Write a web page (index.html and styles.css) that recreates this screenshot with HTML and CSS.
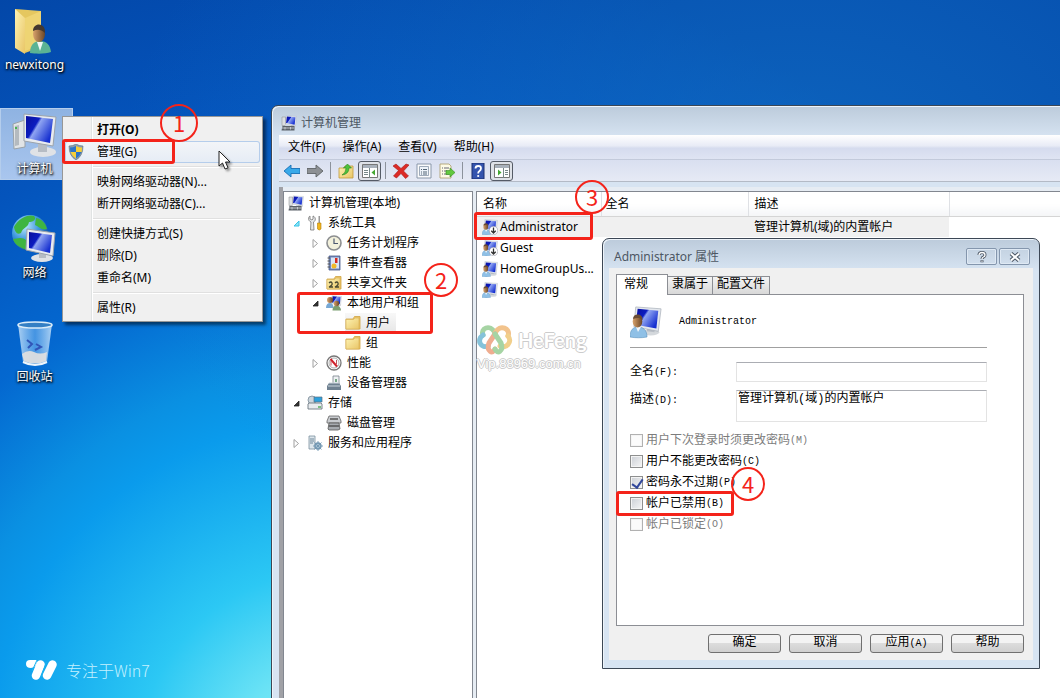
FILE: index.html
```html
<!DOCTYPE html>
<html lang="zh-CN">
<head>
  <meta charset="UTF-8">
  <meta name="viewport" content="width=device-width, initial-scale=1.0">
  <title>计算机管理</title>
  <link rel="stylesheet" href="styles.css">
</head>
<body>

<!-- shared icons -->
<svg class="defs" width="0" height="0" aria-hidden="true">
  <defs>
    <linearGradient id="screen" x1="0" y1="0" x2="1" y2=".6">
      <stop offset="0" stop-color="#0a0f9c"/><stop offset=".4" stop-color="#0c1cc0"/><stop offset=".48" stop-color="#8fa4f2"/><stop offset="1" stop-color="#1630d0"/>
    </linearGradient>
    <linearGradient id="yellow" x1="0" y1="0" x2="1" y2="1">
      <stop offset="0" stop-color="#fdf3b4"/><stop offset="1" stop-color="#e9c566"/>
    </linearGradient>
    <linearGradient id="skin" x1="0" y1="0" x2="1" y2="0">
      <stop offset="0" stop-color="#d9a36c"/><stop offset="1" stop-color="#6a4526"/>
    </linearGradient>
    <radialGradient id="earth" cx=".35" cy=".3" r=".8">
      <stop offset="0" stop-color="#bfeaff"/><stop offset=".5" stop-color="#3c97dc"/><stop offset="1" stop-color="#0a3f8e"/>
    </radialGradient>
    <linearGradient id="glass" x1="0" y1="0" x2="1" y2="0">
      <stop offset="0" stop-color="#d4eafc" stop-opacity=".8"/><stop offset=".5" stop-color="#6fb3f0" stop-opacity=".6"/><stop offset="1" stop-color="#d4eafc" stop-opacity=".8"/>
    </linearGradient>
    <symbol id="i-monitor" viewBox="0 0 32 32">
      <ellipse cx="20" cy="28" rx="9" ry="3.500" fill="#d4d8dc"/>
      <path d="M16 22l8 1v5l-8-1z" fill="#b8bec6"/>
      <path d="M4 1l27 2-3 24L2 22z" fill="#e4e8ee" stroke="#a4abb4" stroke-width=".7"/>
      <path d="M6 3l22 2-2 19L4 20z" fill="url(#screen)"/>
    </symbol>
    <symbol id="i-user" viewBox="0 0 32 32">
      <svg x="2" y="0" width="30" height="30" viewBox="0 0 32 32"><use href="#i-monitor"/></svg>
      <path d="M0 31c0-7 3-10 8-10s9 3 9 10c-5 1-12 1-17 0z" fill="#8fc0e6" stroke="#5b92be" stroke-width=".6"/>
      <path d="M6 21l2 5 3-5z" fill="#f2f6fa"/>
      <ellipse cx="7.500" cy="15.500" rx="4.800" ry="6" fill="url(#skin)"/>
      <path d="M3 13c0-6 10-6 9.500 1-3-3-6-2-9.500-1z" fill="#6a4c33"/>
    </symbol>
    <symbol id="i-userdown" viewBox="0 0 32 32">
      <use href="#i-user"/>
      <circle cx="23" cy="23" r="8.500" fill="#fff" stroke="#889" stroke-width="1"/>
      <path d="M23 17v11M18.500 23.500L23 28l4.500-4.500" fill="none" stroke="#333" stroke-width="2.600"/>
    </symbol>
    <symbol id="i-group" viewBox="0 0 32 32">
      <svg x="9" y="0" width="23" height="24" viewBox="0 0 32 32"><use href="#i-monitor"/></svg>
      <path d="M0 26c0-7 3-10 8-10s7 4 7 10z" fill="#78a8d4"/>
      <circle cx="8" cy="10" r="6" fill="url(#skin)"/>
      <path d="M13 31c0-7 3-10 8-10s9 4 9 10z" fill="#7d9f72"/>
      <circle cx="21" cy="17" r="5.500" fill="url(#skin)"/>
    </symbol>
    <symbol id="i-mmc" viewBox="0 0 32 32">
      <svg x="7" y="0" width="25" height="26" viewBox="0 0 32 32"><use href="#i-monitor"/></svg>
      <path d="M2 4h7v17H2z" fill="#dcdfe2" stroke="#888" stroke-width="1"/>
      <path d="M3 22h24v9H1z" fill="#5b6168"/>
      <path d="M9 22v-3h9v3M2 26h24M8 24v5M19 24v5" fill="none" stroke="#d6d9dd" stroke-width="1.600"/>
    </symbol>
    <symbol id="i-folder" viewBox="0 0 16 16">
      <path d="M1 4h7l1.500-2.500H15V14H1z" fill="#edc768" stroke="#cfa343" stroke-width=".8"/>
      <path d="M1 4.500h7.500L10 3h4v11H1z" fill="url(#yellow)" stroke="#d8b055" stroke-width=".6"/>
    </symbol>
    <symbol id="i-tools" viewBox="0 0 16 16">
      <path d="M3 1v3l2 1 1-1V1c3 1 3 5 .5 6l.5 8H3.500L4 7C1 6 1 2 3 1z" fill="#e6e8ea" stroke="#777" stroke-width=".8"/>
      <path d="M11.500 1h1.500v7h-1.500z" fill="#999"/>
      <path d="M10.500 8h3.500v6q-1.700 2-3.500 0z" fill="#f2b61c" stroke="#b27d0b" stroke-width=".6"/>
    </symbol>
    <symbol id="i-clock" viewBox="0 0 16 16">
      <circle cx="8" cy="8" r="7" fill="#f3f1dc" stroke="#8c8e90" stroke-width="1.600"/>
      <path d="M8 3.500V8.500h4" fill="none" stroke="#4c5870" stroke-width="1.200"/>
    </symbol>
    <symbol id="i-event" viewBox="0 0 16 16">
      <path d="M3 1h11v14H3z" fill="#7389bd" stroke="#4a5b8b" stroke-width=".8"/>
      <path d="M5 2.500h8v11H5z" fill="#dbe5f6"/>
      <path d="M1.500 3h2.500M1.500 6h2.500M1.500 9h2.500M1.500 12h2.500" stroke="#555" stroke-width="1"/>
      <path d="M9 3h2.500v5H9z" fill="#d42a22"/><circle cx="8" cy="11" r="2.500" fill="#f0b929"/>
    </symbol>
    <symbol id="i-share" viewBox="0 0 16 16">
      <use href="#i-folder"/>
      <path d="M3 8q2-2 3 0t-3 4h4M9 8q2-2 3 0t-3 4h4" fill="none" stroke="#4a4a32" stroke-width="1.300"/>
    </symbol>
    <symbol id="i-perf" viewBox="0 0 16 16">
      <circle cx="8" cy="8" r="7" fill="#fff" stroke="#777" stroke-width="1.300"/>
      <circle cx="8" cy="8" r="5" fill="none" stroke="#999" stroke-width=".8"/>
      <path d="M4.500 4l6.500 7.500" stroke="#d1202a" stroke-width="2"/>
      <path d="M5 6v4.500M10.500 5v4" stroke="#c0525a" stroke-width="1"/>
    </symbol>
    <symbol id="i-device" viewBox="0 0 16 16">
      <path d="M7 1h6v8H7z" fill="#eef1f3" stroke="#76818a" stroke-width=".8"/><path d="M9 4h2v3H9z" fill="#76a886"/>
      <path d="M3 8h10l2 3v4H1v-4z" fill="#6f8191"/><path d="M2 11h12M3 8h10" stroke="#cdd6dd" stroke-width="1"/>
    </symbol>
    <symbol id="i-storage" viewBox="0 0 16 16">
      <circle cx="5" cy="5" r="4" fill="#cdd6dd" stroke="#7a8a97" stroke-width=".8"/>
      <path d="M7 2h8v5H7z" fill="#2da0dc" stroke="#5c7183" stroke-width=".7"/>
      <path d="M1 9l1-1h12l1 1v5H1z" fill="#e8ebee" stroke="#6d7882" stroke-width=".9"/>
      <path d="M11 12h3" stroke="#33a03a" stroke-width="1.200"/>
    </symbol>
    <symbol id="i-disk" viewBox="0 0 16 16">
      <path d="M3 1h10l2 5v2H1V6z" fill="#c9ccd0" stroke="#666" stroke-width=".8"/>
      <path d="M3 8h10l1 6-2 1H3l-1-1z" fill="#a7abb0" stroke="#555" stroke-width=".8"/>
      <path d="M4 4h8M3 11h10" stroke="#555" stroke-width="1.300"/>
    </symbol>
    <symbol id="i-service" viewBox="0 0 16 16">
      <path d="M2 1h6v13H2z" fill="#dde6ec" stroke="#7b909e" stroke-width=".8"/>
      <path d="M3 4h4M3 6h4M3 8h3" stroke="#71899b" stroke-width="1"/>
      <circle cx="11" cy="11" r="3" fill="#c9dbe8" stroke="#7397b2" stroke-width="1.300"/>
      <path d="M11 6v10M6 11h10M7.500 7.500l7 7M14.500 7.500l-7 7" stroke="#7397b2" stroke-width=".9"/>
    </symbol>
    <symbol id="i-closed" viewBox="0 0 9 9"><path d="M2 .5L6.500 4.500 2 8.500z" fill="#fff" stroke="#a0a0a0"/></symbol>
    <symbol id="i-open" viewBox="0 0 9 9"><path d="M7 2v5H2z" fill="#333" stroke="#222" stroke-width=".8"/></symbol>
    <symbol id="i-openhot" viewBox="0 0 9 9"><path d="M7 2v5H2z" fill="#8be4f6" stroke="#38c3e6"/></symbol>
  </defs>
</svg>

<main class="desktop">

  <div class="shortcuts">
    <a class="shortcut" href="#">
      <svg viewBox="0 0 48 48">
        <path d="M4 2l26 2v36L14 46z" fill="#e5c75f"/>
        <path d="M4 2l10 9v36L4 41z" fill="url(#yellow)"/>
        <path d="M14 11l16-7v34l-16 6z" fill="#f0d778" opacity=".8"/>
        <path d="M19 46c0-8 4-12 10-12 7 0 10 4 11 11-5 2-15 2-21 1z" fill="#5bb394"/>
        <path d="M26 35l3 9 3-9z" fill="#eef7f4"/>
        <ellipse cx="28" cy="27" rx="6" ry="8" fill="url(#skin)"/>
        <path d="M22 24c0-9 13-9 12 2-4-4-8-4-12-2z" fill="#43382f"/>
      </svg>
      <span>newxitong</span>
    </a>
    <a class="shortcut selected" href="#">
      <svg viewBox="0 0 48 48">
        <path d="M2 13l12-4v27L3 38z" fill="#e1e4e6" stroke="#9aa2a8"/>
        <path d="M4 15l4-1v20l-4 1z" fill="#b4babf"/><circle cx="5" cy="17" r="1" fill="#23b32b"/>
        <ellipse cx="32" cy="41" rx="13" ry="5" fill="#dfe2e6"/>
        <path d="M27 32h9v9h-9z" fill="#b6bcc4"/>
        <path d="M13 3l32 3-3 29-29-5z" fill="#e8ebef" stroke="#9ba3ac"/>
        <path d="M15 5l27 3-3 24-24-5z" fill="url(#screen)"/>
      </svg>
      <span>计算机</span>
    </a>
    <a class="shortcut" href="#">
      <svg viewBox="0 0 48 48">
        <circle cx="19" cy="18" r="18" fill="url(#earth)"/>
        <path d="M3 12C8 3 17-1 23 1c3 3-1 6-5 6-1 6-6 5-8 11-4 2-6-1-7-6zM25 3c6 1 10 6 11 11-5 2-9-3-12-4zM9 23c6 0 9 4 8 12C9 33 3 29 2 24z" fill="#3fb541"/>
        <ellipse cx="31" cy="43" rx="11" ry="4" fill="#dfe2e6"/>
        <path d="M28 34h7v9h-7z" fill="#b6bcc4"/>
        <path d="M16 14l28 4-2 23-27-6z" fill="#e8ebef" stroke="#9ba3ac"/>
        <path d="M18 17l23 3-2 18-21-5z" fill="url(#screen)"/>
      </svg>
      <span>网络</span>
    </a>
    <a class="shortcut" href="#">
      <svg viewBox="0 0 48 48">
        <path d="M7 5h34l-5 38q-12 6-24 0z" fill="url(#glass)"/>
        <path d="M11 35q6-5 12-2t13 0l-1 9q-11 5-22 0z" fill="#e3e1df" opacity=".9"/>
        <path d="M16 21l5 4-4 4M25 25l5 3-6 3" fill="none" stroke="#3156b8" stroke-width="2"/>
        <ellipse cx="24" cy="6" rx="17" ry="3" fill="#347fc4" stroke="#dcecf8" stroke-width="1.500"/>
        <path d="M12 43q12 6 24 0" fill="none" stroke="#edf5fb" stroke-width="2"/>
      </svg>
      <span>回收站</span>
    </a>
  </div>

  <div class="brand">
    <svg viewBox="0 0 33 20">
      <path d="M1 4Q1 0 5 0h7q0 7-6 8Q1 8 1 4z" fill="#fff"/>
      <path d="M15.500 4.500L11 15.500M27.500 4.500L22 15.500" stroke="#fff" stroke-width="8.500" stroke-linecap="round"/>
      <path d="M12 0L7 11M21.500 2L16 17" stroke="#18b4f0" stroke-width="1"/>
    </svg>
    <span>专注于Win7</span>
  </div>

  <section class="window manager">
    <header class="titlebar">
      <svg class="icon"><use href="#i-mmc"/></svg>
      <span>计算机管理</span>
    </header>
    <nav class="menubar">
      <button>文件(F)</button>
      <button>操作(A)</button>
      <button>查看(V)</button>
      <button>帮助(H)</button>
    </nav>
    <div class="toolbar">
      <button aria-label="后退"><svg viewBox="0 0 16 16"><path d="M0 8l7-6v3.500h9v5H7V14z" fill="#39a9ea" stroke="#1a6fb4" stroke-width=".9"/></svg></button>
      <button aria-label="前进"><svg viewBox="0 0 16 16"><path d="M16 8L9 2v3.500H0v5h9V14z" fill="#8d9094" stroke="#606468" stroke-width=".9"/></svg></button>
      <i class="divider"></i>
      <button aria-label="上一级"><svg viewBox="0 0 16 16"><path d="M1 5h5l1-2h8v12H1z" fill="url(#yellow)" stroke="#c39a3b" stroke-width=".8"/><path d="M4 12q4-2 4-7H5.500L9.500 1l4 4H11q0 6-7 7z" fill="#4cc13d" stroke="#27861e" stroke-width=".6"/></svg></button>
      <button class="pressed" aria-label="显示树"><svg viewBox="0 0 16 16"><path d="M.5 1.500h15v13H.5z" fill="#fff" stroke="#777"/><path d="M1 2h14v3H1z" fill="#a9b1bb"/><path d="M7.500 5v10M2 7.500h4M2 9.500h4M2 11.500h4" stroke="#788" stroke-width="1"/><path d="M13 6.500v6L9.500 9.500z" fill="#45a832"/></svg></button>
      <i class="divider"></i>
      <button aria-label="删除"><svg viewBox="0 0 16 16"><path d="M0 3l3-2 5 4.500L13 1l3 1-5.500 6 5 5-3 2.500L8 10.500 3.500 15 .5 13l5-5.500z" fill="#dc2a26" stroke="#a81915" stroke-width=".6"/></svg></button>
      <button aria-label="属性"><svg viewBox="0 0 16 16"><path d="M1 1h14v14H1z" fill="#fbfbfc" stroke="#8997aa"/><path d="M3.500 3.500h9v9h-9z" fill="#eef3f9" stroke="#8997aa" stroke-width=".8"/><path d="M5 6.500h1M7 6.500h4M5 9h1M7 9h4M5 11h1M7 11h4" stroke="#567"/></svg></button>
      <button aria-label="导出列表"><svg viewBox="0 0 16 16"><path d="M1 1h9l2 2v12H1z" fill="#fdfbe6" stroke="#a89a68" stroke-width=".8"/><path d="M3 5h1M5 5h5M3 8h1M5 8h3M3 11h1M5 11h5" stroke="#667"/><path d="M7 7.500h4V5l5 4.500-5 4.500v-2.500H7z" fill="#62c83f" stroke="#358c1e" stroke-width=".6"/></svg></button>
      <i class="divider"></i>
      <button aria-label="帮助"><svg viewBox="0 0 16 16"><path d="M2 0h12v16H2z" fill="#3454ae" stroke="#1b2e70"/><path d="M5.500 5.500q0-2.500 2.700-2.500t2.800 2.300Q11 7 9.500 8T8.200 10.500" fill="none" stroke="#fff" stroke-width="1.800"/><circle cx="8.200" cy="13" r="1.100" fill="#fff"/></svg></button>
      <button class="pressed" aria-label="显示操作"><svg viewBox="0 0 16 16"><path d="M.5 1.500h15v13H.5z" fill="#fff" stroke="#777"/><path d="M1 2h14v3H1z" fill="#a9b1bb"/><path d="M9.500 5v10M11 7.500h3M11 9.500h3M11 11.500h3" stroke="#788" stroke-width="1"/><path d="M4 6.500v6l3.500-3z" fill="#45a832"/></svg></button>
    </div>

    <div class="workspace">
      <div class="tree">
        <div class="node root"><svg class="icon"><use href="#i-mmc"/></svg><span>计算机管理(本地)</span></div>
        <ul>
          <li>
            <div class="node"><svg class="arrow"><use href="#i-openhot"/></svg><svg class="icon"><use href="#i-tools"/></svg><span>系统工具</span></div>
            <ul>
              <li><div class="node"><svg class="arrow"><use href="#i-closed"/></svg><svg class="icon"><use href="#i-clock"/></svg><span>任务计划程序</span></div></li>
              <li><div class="node"><svg class="arrow"><use href="#i-closed"/></svg><svg class="icon"><use href="#i-event"/></svg><span>事件查看器</span></div></li>
              <li><div class="node"><svg class="arrow"><use href="#i-closed"/></svg><svg class="icon"><use href="#i-share"/></svg><span>共享文件夹</span></div></li>
              <li>
                <div class="node"><svg class="arrow"><use href="#i-open"/></svg><svg class="icon"><use href="#i-group"/></svg><span>本地用户和组</span></div>
                <ul>
                  <li><div class="node leaf current"><svg class="icon"><use href="#i-folder"/></svg><span>用户</span></div></li>
                  <li><div class="node leaf"><svg class="icon"><use href="#i-folder"/></svg><span>组</span></div></li>
                </ul>
              </li>
              <li><div class="node"><svg class="arrow"><use href="#i-closed"/></svg><svg class="icon"><use href="#i-perf"/></svg><span>性能</span></div></li>
              <li><div class="node leaf"><svg class="icon"><use href="#i-device"/></svg><span>设备管理器</span></div></li>
            </ul>
          </li>
          <li>
            <div class="node"><svg class="arrow"><use href="#i-open"/></svg><svg class="icon"><use href="#i-storage"/></svg><span>存储</span></div>
            <ul>
              <li><div class="node leaf"><svg class="icon"><use href="#i-disk"/></svg><span>磁盘管理</span></div></li>
            </ul>
          </li>
          <li><div class="node"><svg class="arrow"><use href="#i-closed"/></svg><svg class="icon"><use href="#i-service"/></svg><span>服务和应用程序</span></div></li>
        </ul>
      </div>

      <div class="list">
        <table>
          <colgroup><col class="c-name"><col class="c-full"><col class="c-desc"><col></colgroup>
          <thead>
            <tr><th>名称</th><th>全名</th><th>描述</th><th></th></tr>
          </thead>
          <tbody>
            <tr class="current"><td><div class="user"><svg class="icon"><use href="#i-userdown"/></svg>Administrator</div></td><td></td><td class="desc">管理计算机(域)的内置帐户</td><td></td></tr>
            <tr><td><div class="user"><svg class="icon"><use href="#i-userdown"/></svg>Guest</div></td><td></td><td></td><td></td></tr>
            <tr><td><div class="user"><svg class="icon"><use href="#i-user"/></svg>HomeGroupUs...</div></td><td></td><td></td><td></td></tr>
            <tr><td><div class="user"><svg class="icon"><use href="#i-user"/></svg>newxitong</div></td><td></td><td></td><td></td></tr>
          </tbody>
        </table>
        <div class="watermark">
          <div class="mark-top">
            <svg viewBox="0 0 36 32">
              <g fill="none" stroke-width="5" stroke-linecap="round">
                <path d="M18 9C13-1 3 5 6 11" stroke="#a6d4a4"/>
                <path d="M18 9C23-1 34 5 31 12" stroke="#f2c38c"/>
                <path d="M6 11C-1 16 4 25 11 22" stroke="#85c2da"/>
                <path d="M31 12c5 6-2 13-8 10" stroke="#f1cf8b"/>
                <path d="M18 10l-6 9c-3 8 4 12 6 6" stroke="#efad90"/>
                <path d="M18 10l6 9c3 8-4 12-6 6" stroke="#a6d4a4"/>
              </g>
            </svg>
            <b>HeFeng</b>
          </div>
          <div class="mark-url">Vip.88969.com.cn</div>
        </div>
      </div>
    </div>
  </section>

  <section class="window dialog" role="dialog" aria-label="Administrator 属性">
    <header class="titlebar">
      <span>Administrator 属性</span>
      <button aria-label="帮助"><svg viewBox="0 0 12 12"><path d="M3 4q0-2.500 3-2.500T9 4q0 1.500-1.500 2T6 8M6 9.200v2" fill="none" stroke="#4a5563" stroke-width="3"/><path d="M3 4q0-2.500 3-2.500T9 4q0 1.500-1.500 2T6 8M6 9.700v1" fill="none" stroke="#fff" stroke-width="1.300"/></svg></button>
      <button aria-label="关闭"><svg viewBox="0 0 12 12"><path d="M2 2.500l8 7M10 2.500l-8 7" stroke="#4a5563" stroke-width="4"/><path d="M2 2.500l8 7M10 2.500l-8 7" stroke="#fff" stroke-width="2"/></svg></button>
    </header>
    <div class="client">
      <div class="tabs">
        <button class="active">常规</button>
        <button>隶属于</button>
        <button>配置文件</button>
      </div>
      <div class="panel">
        <div class="who"><svg><use href="#i-user"/></svg><span class="en">Administrator</span></div>
        <div class="field"><label for="fullname">全名<span class="en">(F):</span></label><input type="text" id="fullname"></div>
        <div class="field"><label for="desc">描述<span class="en">(D):</span></label><textarea id="desc">管理计算机(域)的内置帐户</textarea></div>
        <div class="checks">
          <label class="off"><input type="checkbox" disabled>用户下次登录时须更改密码<span class="en">(M)</span></label>
          <label><input type="checkbox">用户不能更改密码<span class="en">(C)</span></label>
          <label><input type="checkbox" checked>密码永不过期<span class="en">(P)</span></label>
          <label><input type="checkbox">帐户已禁用<span class="en">(B)</span></label>
          <label class="off"><input type="checkbox" disabled>帐户已锁定<span class="en">(O)</span></label>
        </div>
      </div>
      <div class="actions">
        <button>确定</button>
        <button>取消</button>
        <button>应用<span class="en">(A)</span></button>
        <button>帮助</button>
      </div>
    </div>
  </section>

  <div class="context">
    <button class="bold">打开(O)</button>
    <button class="hover"><svg viewBox="0 0 16 16"><path d="M8 0q3 2 7 2 0 10-7 14Q1 12 1 2q4 0 7-2z" fill="#8ea0ae" stroke="#5b6d7b" stroke-width=".6"/><path d="M8 2v6H2.500Q2 6 2 3.500 5 3.500 8 2z" fill="#2c74c8"/><path d="M8 2v6h5.500q.5-2 .5-4.500Q11 3.500 8 2z" fill="#f6cf38"/><path d="M8 8v6.500Q4 12 2.500 8z" fill="#f6cf38"/><path d="M8 8v6.500q4-2.500 5.500-6.500z" fill="#2c74c8"/></svg>管理(G)</button>
    <hr>
    <button>映射网络驱动器(N)...</button>
    <button>断开网络驱动器(C)...</button>
    <hr>
    <button>创建快捷方式(S)</button>
    <button>删除(D)</button>
    <button>重命名(M)</button>
    <hr>
    <button>属性(R)</button>
  </div>

  <svg class="cursor" viewBox="0 0 13 20"><path d="M1 1v15l3.500-3 2.500 6 3-1.200L7.500 12H12z" fill="#fff" stroke="#222" stroke-width="1"/></svg>

  <!-- step marks -->
  <div class="frame frame-1"></div><div class="step step-1">1</div>
  <div class="frame frame-2"></div><div class="step step-2">2</div>
  <div class="frame frame-3"></div><div class="step step-3">3</div>
  <div class="frame frame-4"></div><div class="step step-4">4</div>
</main>

</body>
</html>
```
FILE: styles.css
```css
* {
  box-sizing: border-box;
}
body {
  margin: 0;
  font: 12px/20px "Noto Sans", "Noto Sans CJK SC", sans-serif;
  color: #000;
}
button, input, textarea {
  font: inherit;
  color: inherit;
  margin: 0;
}
button {
  border: 0;
  padding: 0;
  background: none;
  white-space: nowrap;
}
.defs {
  position: absolute;
}
.icon {
  width: 16px;
  height: 16px;
  flex: none;
}
.desktop {
  position: relative;
  height: 100vh;
  overflow: hidden;
  background:
    radial-gradient(ellipse at 75% 25%, rgba(20, 120, 205, .6), rgba(20, 120, 205, 0) 60%),
    radial-gradient(circle at 31% 109%, #8cf0f9 0, #6ce3f5 92px, #2cc8f4 190px, #0a9bec 340px, #0a90e2 390px, #0468d0 500px, #0454bc 650px, #0347a8 830px);
}

/* desktop shortcuts */
.shortcuts {
  display: flex;
  flex-direction: column;
  gap: 32px;
  width: 73px;
  padding-top: 4px;
}
.shortcut {
  display: flex;
  flex-direction: column;
  align-items: center;
  height: 72px;
  padding: 3px 4px 0 0;
  color: #fff;
  text-decoration: none;
  text-shadow: 1px 1px 2px #000, 0 1px 3px #000;
}
.shortcut svg {
  width: 48px;
  height: 48px;
}
.shortcut.selected {
  padding-top: 2px;
  background: linear-gradient(#8fb3e2, #a9c6ee);
  border: 1px solid #b4cdec;
}
.brand {
  position: absolute;
  left: 25px;
  bottom: 16px;
  display: flex;
  align-items: center;
  gap: 8px;
  font-size: 16px;
  line-height: 24px;
  color: #c4f1ff;
}
.brand span {
  font-family: "Noto Sans CJK SC", sans-serif;
  font-weight: 300;
}
.brand svg {
  width: 33px;
  height: 20px;
}

/* windows */
.window {
  position: absolute;
  border: 1px solid #3c4755;
  border-radius: 7px 7px 0 0;
  background: linear-gradient(#bccbdb, #d7e4f2 32px);
  box-shadow: inset 1px 1px 0 #eef4fa;
}
.titlebar {
  display: flex;
  align-items: center;
  color: #4d5763;
}
.manager {
  display: flex;
  flex-direction: column;
  left: 271px;
  right: -8px;
  top: 105px;
  bottom: -8px;
  padding-left: 7px;
}
.manager .titlebar {
  height: 29px;
  padding: 4px 0 0 2px;
  gap: 4px;
}
.menubar {
  display: flex;
  gap: 17px;
  height: 24px;
  padding-left: 9px;
  background: linear-gradient(#fff, #e8ebf6 45%, #d5dbee 55%, #dfe4f3);
}
.toolbar {
  display: flex;
  align-items: center;
  height: 23px;
  padding-left: 5px;
  gap: 7px;
  background: linear-gradient(#d9dff0, #e6eaf5);
  border-top: 1px solid #c3cadb;
  border-bottom: 1px solid #b3bac6;
}
.toolbar button {
  width: 16px;
  height: 16px;
}
.toolbar svg {
  display: block;
  width: 16px;
  height: 16px;
}
.toolbar .pressed {
  width: 23px;
  height: 20px;
  padding: 0 3px;
  margin: 0 -3px;
  border: 1px solid #555b66;
  border-radius: 3px;
  background: #dfe2e8;
}
.divider {
  width: 1px;
  height: 17px;
  background: #8c929c;
}
.workspace {
  flex: 1;
  display: flex;
  gap: 3px;
  padding-top: 4px;
  margin-top: 5px;
  background: #e6ecf3;
  border-left: 4px solid #a0a1a6;
}
.tree {
  flex: none;
  width: 190px;
  padding-top: 1px;
  background: #fff;
  border: 1px solid #828790;
}
.tree ul {
  margin: 0;
  padding: 0 0 0 19px;
  list-style: none;
}
.tree > ul {
  padding-left: 8px;
}
.node {
  display: flex;
  align-items: center;
  height: 20px;
  white-space: nowrap;
}
.node span {
  padding: 0 5px;
}
.arrow {
  flex: none;
  width: 9px;
  height: 9px;
  margin-right: 6px;
}
.root {
  padding-left: 4px;
}
.leaf {
  padding-left: 15px;
}
.current.leaf {
  width: 66px;
  background: linear-gradient(#f8f8f8, #e6e6e6) content-box;
}
.list {
  flex: 1;
  background: #fff;
  border: 1px solid #828790;
}
.list table {
  width: 100%;
  table-layout: fixed;
  border-collapse: collapse;
}
.c-name {
  width: 124px;
}
.c-full {
  width: 147px;
}
.c-desc {
  width: 201px;
}
.list th {
  height: 24px;
  padding: 1px 0 0 6px;
  font-weight: normal;
  text-align: left;
  background: linear-gradient(#fff 50%, #f4f5f7);
  border-right: 1px solid #dfe1e5;
  border-bottom: 1px solid #d5d5d5;
}
.list th:nth-child(2) {
  padding-left: 4px;
}
.list td {
  height: 21px;
  padding: 0 0 0 6px;
  white-space: nowrap;
}
.list .user {
  display: flex;
  align-items: center;
  gap: 2px;
  margin-left: -1px;
}
.list .current td:not(:last-child) {
  background: #f0f0f0;
}
.watermark {
  width: 110px;
  margin-top: 24px;
}
.mark-top {
  display: flex;
  align-items: center;
  gap: 5px;
  font-size: 20px;
  line-height: 30px;
}
.mark-top b {
  font-family: Lato, sans-serif;
}
.mark-top b, .mark-url {
  color: #fff;
  text-shadow: 1px 0 #ccc, -1px 0 #ccc, 0 1px #ccc, 0 -1px #ccc;
}
.mark-top svg {
  width: 36px;
  height: 32px;
}
.mark-url {
  font: 13px/16px "Liberation Sans", sans-serif;
}

/* properties dialog */
.dialog {
  left: 602px;
  right: 20px;
  top: 238px;
  padding: 0 6px 8px;
  font-family: "Liberation Mono", "Noto Sans CJK SC", monospace;
}
.dialog .titlebar {
  height: 29px;
  gap: 2px;
  padding: 6px 3px 0 5px;
  font: 12px/20px "Noto Sans", "Noto Sans CJK SC", sans-serif;
}
.dialog .titlebar span {
  flex: 1;
}
.dialog .titlebar button {
  display: flex;
  align-items: center;
  justify-content: center;
  width: 31px;
  height: 17px;
  border: 1px solid #8496ad;
  border-radius: 2px;
  box-shadow: inset 0 0 0 1px #dfe9f4;
}
.dialog .titlebar svg {
  width: 12px;
  height: 12px;
}
.client {
  padding: 6px 9px 7px 7px;
  background: #f0f0f0;
}
.en {
  font-size: 10px;
}
.tabs {
  display: flex;
  align-items: flex-end;
}
.tabs button {
  height: 18px;
  padding: 0 4px;
  line-height: 17px;
  border: 1px solid #8c8e94;
  border-bottom: 0;
  border-left-width: 0;
  background: linear-gradient(#f4f4f4, #d8d8d8);
}
.tabs .active {
  height: 21px;
  width: 52px;
  padding: 0 20px 0 7px;
  margin-bottom: -1px;
  border-left-width: 1px;
  background: #fff;
  z-index: 1;
}
.panel {
  min-height: 332px;
  padding: 10px 36px 0 13px;
  background: #fff;
  border: 1px solid #8c8e94;
}
.who {
  display: flex;
  align-items: center;
  gap: 17px;
  height: 43px;
  padding-bottom: 8px;
  border-bottom: 1px solid #a0a0a0;
}
.who svg {
  width: 32px;
  height: 34px;
}
.who .en {
  line-height: 16px;
}
.field {
  display: flex;
  margin-top: 7px;
}
.field label {
  width: 106px;
}
.who + .field {
  margin-top: 14px;
}
.field input, .field textarea {
  flex: 1;
  min-width: 0;
  height: 20px;
  padding: 0 1px;
  line-height: 16px;
  border: 1px solid #e3e3e3;
  border-top-color: #abadb3;
  background: #fff;
  resize: none;
  overflow: hidden;
}
.field textarea {
  height: 32px;
}
.checks {
  margin-top: 8px;
}
.checks label {
  display: flex;
  align-items: center;
  gap: 3px;
  height: 21px;
}
.checks .en {
  margin-left: -3px;
}
.checks .off {
  color: #7c7c7c;
}
.checks input {
  appearance: none;
  position: relative;
  width: 13px;
  height: 13px;
  border: 1px solid #8e8f8f;
  background: linear-gradient(135deg, #cbcfd5, #f6f6f6);
  box-shadow: inset 0 0 0 1px #f4f4f4;
}
.checks input:disabled {
  border-color: #b1b1b1;
  background: #fbfbfb;
}
.checks input:checked::after {
  content: "";
  position: absolute;
  left: 3px;
  top: 0;
  width: 5px;
  height: 9px;
  border: solid #31479b;
  border-width: 0 2px 2px 0;
  transform: rotate(35deg);
}
.actions {
  display: flex;
  justify-content: flex-end;
  gap: 8px;
  padding-top: 8px;
}
.actions button {
  width: 73px;
  height: 19px;
  line-height: 17px;
  border: 1px solid #707070;
  border-radius: 3px;
  background: linear-gradient(#f3f3f3 50%, #dcdcdc 50%, #cfcfcf);
}

/* context menu */
.context {
  position: absolute;
  left: 62px;
  top: 116px;
  width: 201px;
  padding: 2px;
  border: 1px solid #979797;
  background: linear-gradient(90deg, #f0f0f0 28px, #e0e3e3 28px, #e0e3e3 29px, #fff 29px, #fff 30px, #f0f0f0 30px);
  box-shadow: 3px 3px 3px rgba(0, 0, 0, .5);
}
.context button {
  display: block;
  position: relative;
  width: 100%;
  height: 22px;
  padding-left: 32px;
  text-align: left;
}
.context .bold {
  font-weight: bold;
}
.context .hover {
  border-radius: 3px;
  background: linear-gradient(#f3f5f8, #e5ecf5);
  box-shadow: inset 0 0 0 1px #b5cdeb;
}
.context button svg {
  position: absolute;
  left: 3px;
  top: 3px;
  width: 16px;
  height: 16px;
}
.context hr {
  height: 2px;
  margin: 3px 0 3px 28px;
  border: solid #e0e0e0;
  border-width: 1px 0 0;
  background: #fff;
}
.cursor {
  position: absolute;
  left: 218px;
  top: 150px;
  width: 13px;
  height: 20px;
  filter: drop-shadow(2px 2px 1px rgba(0, 0, 0, .4));
}

/* red marks */
.frame, .step {
  position: absolute;
  border: 3px solid #f4231a;
  pointer-events: none;
}
.frame {
  border-radius: 3px;
}
.step {
  width: 34px;
  height: 34px;
  border-radius: 50%;
  border-width: 2px;
  color: #f4231a;
  font: 22px/29px "Noto Sans CJK SC", sans-serif;
  text-align: center;
}
.frame-1 {
  left: 62px;
  top: 139px;
  width: 113px;
  height: 25px;
}
.frame-2 {
  left: 297px;
  top: 292px;
  width: 136px;
  height: 42px;
}
.frame-3 {
  left: 474px;
  top: 212px;
  width: 119px;
  height: 28px;
}
.frame-4 {
  left: 616px;
  top: 491px;
  width: 118px;
  height: 25px;
}
.step-1 {
  left: 160px;
  top: 104px;
  width: 38px;
  height: 38px;
  line-height: 32px;
}
.step-2 {
  left: 424px;
  top: 263px;
}
.step-3 {
  left: 575px;
  top: 180px;
}
.step-4 {
  left: 731px;
  top: 467px;
}
```
